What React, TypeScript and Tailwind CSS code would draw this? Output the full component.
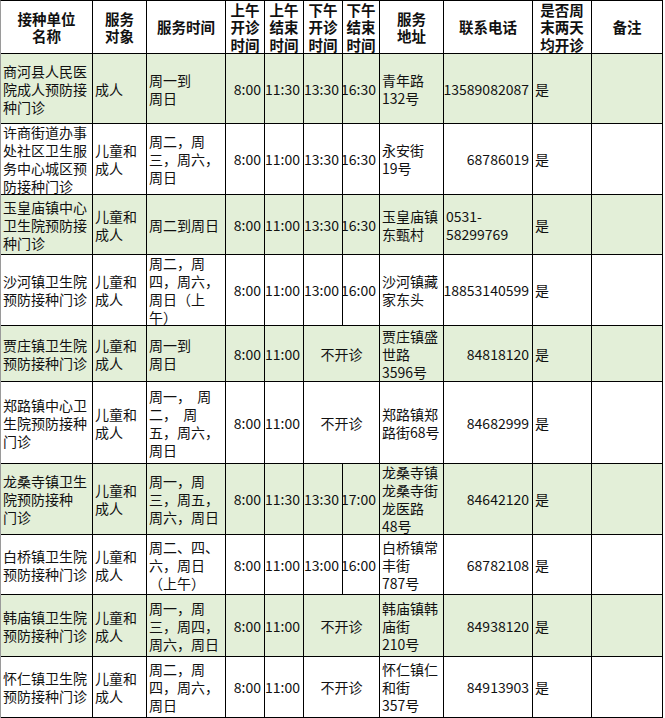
import React from 'react';

type Align = 'left' | 'right' | 'center';

type Row = {
	name: string[];
	target: string[];
	days: string[];
	amStart: string;
	amEnd: string;
	pmStart?: string;
	pmEnd?: string;
	address: string[];
	phone: string[];
	phoneAlign: Align;
	weekend: string;
	green: boolean;
	height: string;
};

const HEADERS: string[][] = [
	['接种单位', '名称'],
	['服务', '对象'],
	['服务时间'],
	['上午', '开诊', '时间'],
	['上午', '结束', '时间'],
	['下午', '开诊', '时间'],
	['下午', '结束', '时间'],
	['服务', '地址'],
	['联系电话'],
	['是否周', '末两天', '均开诊'],
	['备注'],
];

const ROWS: Row[] = [
	{
		name: ['商河县人民医', '院成人预防接', '种门诊'],
		target: ['成人'],
		days: ['周一到', '周日'],
		amStart: '8:00', amEnd: '11:30', pmStart: '13:30', pmEnd: '16:30',
		address: ['青年路', '132号'],
		phone: ['13589082087'], phoneAlign: 'right',
		weekend: '是', green: true, height: 'h-[70px]',
	},
	{
		name: ['许商街道办事', '处社区卫生服', '务中心城区预', '防接种门诊'],
		target: ['儿童和', '成人'],
		days: ['周二，周', '三，周六，', '周日'],
		amStart: '8:00', amEnd: '11:00', pmStart: '13:30', pmEnd: '16:30',
		address: ['永安街', '19号'],
		phone: ['68786019'], phoneAlign: 'right',
		weekend: '是', green: false, height: 'h-[71px]',
	},
	{
		name: ['玉皇庙镇中心', '卫生院预防接', '种门诊'],
		target: ['儿童和', '成人'],
		days: ['周二到周日'],
		amStart: '8:00', amEnd: '11:00', pmStart: '13:30', pmEnd: '16:30',
		address: ['玉皇庙镇', '东甄村'],
		phone: ['0531-', '58299769'], phoneAlign: 'left',
		weekend: '是', green: true, height: 'h-[60px]',
	},
	{
		name: ['沙河镇卫生院', '预防接种门诊'],
		target: ['儿童和', '成人'],
		days: ['周二，周', '四，周六，', '周日（上', '午）'],
		amStart: '8:00', amEnd: '11:00', pmStart: '13:00', pmEnd: '16:00',
		address: ['沙河镇藏', '家东头'],
		phone: ['18853140599'], phoneAlign: 'right',
		weekend: '是', green: false, height: 'h-[71px]',
	},
	{
		name: ['贾庄镇卫生院', '预防接种门诊'],
		target: ['儿童和', '成人'],
		days: ['周一到', '周日'],
		amStart: '8:00', amEnd: '11:00',
		address: ['贾庄镇盛', '世路', '3596号'],
		phone: ['84818120'], phoneAlign: 'right',
		weekend: '是', green: true, height: 'h-[56px]',
	},
	{
		name: ['郑路镇中心卫', '生院预防接种', '门诊'],
		target: ['儿童和', '成人'],
		days: ['周一，\u00a0\u00a0周', '二，\u00a0\u00a0周', '五，周六，', '周日'],
		amStart: '8:00', amEnd: '11:00',
		address: ['郑路镇郑', '路街68号'],
		phone: ['84682999'], phoneAlign: 'right',
		weekend: '是', green: false, height: 'h-[82px]',
	},
	{
		name: ['龙桑寺镇卫生', '院预防接种', '门诊'],
		target: ['儿童和', '成人'],
		days: ['周一，周', '三，周五，', '周六，周日'],
		amStart: '8:00', amEnd: '11:30', pmStart: '13:30', pmEnd: '17:00',
		address: ['龙桑寺镇', '龙桑寺街', '龙医路', '48号'],
		phone: ['84642120'], phoneAlign: 'right',
		weekend: '是', green: true, height: 'h-[71px]',
	},
	{
		name: ['白桥镇卫生院', '预防接种门诊'],
		target: ['儿童和', '成人'],
		days: ['周二、四、', '六，周日', '（上午）'],
		amStart: '8:00', amEnd: '11:00', pmStart: '13:00', pmEnd: '16:00',
		address: ['白桥镇常', '丰街', '787号'],
		phone: ['68782108'], phoneAlign: 'right',
		weekend: '是', green: false, height: 'h-[60px]',
	},
	{
		name: ['韩庙镇卫生院', '预防接种门诊'],
		target: ['儿童和', '成人'],
		days: ['周一，周', '三，周四，', '周六，周日'],
		amStart: '8:00', amEnd: '11:00',
		address: ['韩庙镇韩', '庙街', '210号'],
		phone: ['84938120'], phoneAlign: 'right',
		weekend: '是', green: true, height: 'h-[62px]',
	},
	{
		name: ['怀仁镇卫生院', '预防接种门诊'],
		target: ['儿童和', '成人'],
		days: ['周二，周', '四，周六，', '周日'],
		amStart: '8:00', amEnd: '11:00',
		address: ['怀仁镇仁', '和街', '357号'],
		phone: ['84913903'], phoneAlign: 'right',
		weekend: '是', green: false, height: 'h-[61px]',
	},
];

const alignClass = (align: Align) => {
	if (align === 'right') return 'justify-end text-right pr-[3px]';
	if (align === 'center') return 'justify-center text-center';
	return 'justify-start text-left pl-[2px]';
};

const Cell: React.FC<{
	lines: string[];
	align?: Align;
	green?: boolean;
	span?: boolean;
}> = ({ lines, align = 'left', green = false, span = false }) => (
	<div
		className={`flex items-center overflow-hidden border-r border-b border-black ${alignClass(align)} ${green ? 'bg-[#e3efd8]' : 'bg-white'} ${span ? 'col-span-2' : ''}`}
	>
		<div>
			{lines.map((line, i) => (
				<div key={i} className="whitespace-nowrap">{line}</div>
			))}
		</div>
	</div>
);

export default function App() {
	return (
		<div className="w-[665px] h-[718px] bg-white overflow-hidden">
			<div
				className="w-[663px] border-l border-t border-l-[#9a9a9a] border-t-black text-[#111] text-[14px] leading-[18px]"
				style={{ fontFamily: '"Noto Sans CJK SC", "Noto Sans", sans-serif' }}
			>
				{/* header */}
				<div className="grid grid-cols-[92px_54px_79px_39px_39px_39px_37px_64px_89px_59px_71px] h-[53px] font-bold text-[14.5px] leading-[17.5px]">
					{HEADERS.map((h, i) => (
						<Cell key={i} lines={h} align="center" />
					))}
				</div>

				{ROWS.map((row, idx) => (
					<div
						key={idx}
						className={`grid grid-cols-[92px_54px_79px_39px_39px_39px_37px_64px_89px_59px_71px] ${row.height}`}
					>
						<Cell lines={row.name} green={row.green} />
						<Cell lines={row.target} green={row.green} />
						<Cell lines={row.days} green={row.green} />
						<Cell lines={[row.amStart]} align="right" green={row.green} />
						<Cell lines={[row.amEnd]} align="right" green={row.green} />
						{row.pmStart ? (
							<>
								<Cell lines={[row.pmStart]} align="right" green={row.green} />
								<Cell lines={[row.pmEnd ?? '']} align="right" green={row.green} />
							</>
						) : (
							<Cell lines={['不开诊']} align="center" green={row.green} span />
						)}
						<Cell lines={row.address} green={row.green} />
						<Cell lines={row.phone} align={row.phoneAlign} green={row.green} />
						<Cell lines={[row.weekend]} green={row.green} />
						<Cell lines={['']} green={row.green} />
					</div>
				))}
			</div>
		</div>
	);
}
